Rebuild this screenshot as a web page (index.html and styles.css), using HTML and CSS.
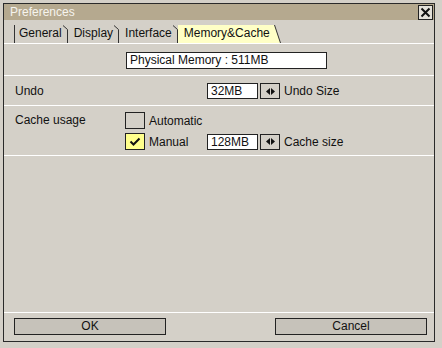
FILE: index.html
```html
<!DOCTYPE html>
<html lang="en">
<head>
    <meta charset="UTF-8">
    <title>Preferences</title>
    <link rel="stylesheet" href="styles.css">
</head>
<body>
    <div class="window">
        <div class="titlebar">
            <span class="title">Preferences</span>
            <div class="close-btn">
                <svg width="11" height="11" viewBox="0 0 11 11"><path d="M1.5 1.5 L9.5 9.5 M9.5 1.5 L1.5 9.5" stroke="#111" stroke-width="2"/></svg>
            </div>
        </div>

        <div class="tabs">
            <div class="tab first"><span>General</span><svg class="tab-edge" width="5" height="18"><path d="M0 0.5 L4.5 4.5 L4.5 18" stroke="#333" fill="none"/></svg></div>
            <div class="tab"><span>Display</span><svg class="tab-edge" width="5" height="18"><path d="M0 0.5 L4.5 4.5 L4.5 18" stroke="#333" fill="none"/></svg></div>
            <div class="tab"><span>Interface</span><svg class="tab-edge" width="5" height="18"><path d="M0 0.5 L4.5 4.5 L4.5 18" stroke="#333" fill="none"/></svg></div>
            <div class="tab active"><span>Memory&amp;Cache</span><svg class="tab-edge" width="7" height="18"><polygon points="0,0 0.5,0 6.5,18 0,18" fill="#ffffc6"/><path d="M0.5 0 L6.5 18" stroke="#333" fill="none"/></svg></div>
        </div>

        <div class="section memory">
            <div class="memory-box">Physical Memory : 511MB</div>
        </div>

        <div class="section undo">
            <div class="row-label">Undo</div>
            <div class="field">
                <div class="textbox">32MB</div>
                <div class="spinner">
                    <svg width="9" height="7" viewBox="0 0 9 7"><polygon points="0,3.5 4,0 4,7" fill="#111"/><polygon points="9,3.5 5,0 5,7" fill="#111"/></svg>
                </div>
                <span class="field-label">Undo Size</span>
            </div>
        </div>

        <div class="section cache">
            <div class="row-label">Cache usage</div>
            <div class="options">
                <div class="option">
                    <div class="check-label">
                        <div class="checkbox"></div>
                        <span>Automatic</span>
                    </div>
                </div>
                <div class="option">
                    <div class="check-label">
                        <div class="checkbox checked">
                            <svg width="12" height="10" viewBox="0 0 12 10"><path d="M1.5 4.5 L4.5 7.5 L10.5 1.5" stroke="#111" stroke-width="2" fill="none"/></svg>
                        </div>
                        <span>Manual</span>
                    </div>
                    <div class="field">
                        <div class="textbox">128MB</div>
                        <div class="spinner">
                            <svg width="9" height="7" viewBox="0 0 9 7"><polygon points="0,3.5 4,0 4,7" fill="#111"/><polygon points="9,3.5 5,0 5,7" fill="#111"/></svg>
                        </div>
                        <span class="field-label">Cache size</span>
                    </div>
                </div>
            </div>
        </div>

        <div class="section spacer"></div>

        <div class="footer">
            <div class="btn">OK</div>
            <div class="btn">Cancel</div>
        </div>
    </div>
</body>
</html>
```

FILE: styles.css
```css
* {
    margin: 0;
    padding: 0;
    box-sizing: border-box;
}

body {
    font-family: 'Liberation Sans', Arial, sans-serif;
    font-size: 12px;
    background: #d4d0c8;
    color: #111;
    width: 442px;
    height: 348px;
    overflow: hidden;
}

.window {
    margin: 3px 0 0 3px;
    width: 432px;
    height: 339px;
    border: 1px solid #2a2a2a;
    display: flex;
    flex-direction: column;
}

.titlebar {
    height: 16px;
    background: #b5a98f;
    display: flex;
    align-items: center;
    justify-content: space-between;
    padding: 0 1px 0 6px;
}

.title {
    color: #f6f4ee;
    line-height: 16px;
}

.close-btn {
    width: 15px;
    height: 15px;
    background: #e4e1da;
    border: 1px solid #222;
    display: flex;
    align-items: center;
    justify-content: center;
}

.tabs {
    margin-top: 5px;
    height: 19px;
    padding-left: 10px;
    border-bottom: 1px solid #fff;
    display: flex;
    align-items: flex-start;
}

.tab {
    height: 18px;
    display: flex;
    align-items: flex-start;
}

.tab span {
    line-height: 17px;
    padding: 0 1px 0 6px;
}

.tab.first {
    border-left: 1px solid #333;
}

.tab.first span {
    padding-left: 4px;
}

.tab-edge {
    display: block;
}

.tab.active span {
    background: #ffffc6;
    padding: 0 4px 0 6px;
    height: 18px;
}

.section {
    border-bottom: 1px solid #fff;
    display: flex;
}

.memory {
    height: 32px;
    padding: 8px 0 0 122px;
}

.memory-box {
    width: 201px;
    height: 17px;
    background: #fff;
    border: 1px solid #222;
    padding-left: 3px;
    line-height: 15px;
}

.row-label {
    width: 110px;
    padding-left: 11px;
    line-height: 16px;
}

.undo {
    height: 30px;
    padding-top: 7px;
}

.undo .field {
    margin-left: 93px;
}

.field {
    display: flex;
    align-items: center;
    height: 16px;
}

.textbox {
    width: 51px;
    height: 16px;
    background: #fff;
    border: 1px solid #222;
    padding-left: 3px;
    line-height: 14px;
}

.spinner {
    width: 20px;
    height: 16px;
    margin-left: 2px;
    border: 1px solid #222;
    display: flex;
    align-items: center;
    justify-content: center;
}

.field-label {
    margin-left: 4px;
}

.cache {
    height: 50px;
    padding-top: 6px;
}

.cache .row-label {
    line-height: 17px;
}

.options {
    display: flex;
    flex-direction: column;
    gap: 4px;
    margin-left: 11px;
}

.option {
    display: flex;
    align-items: center;
}

.check-label {
    width: 82px;
    display: flex;
    align-items: center;
    gap: 4px;
}

.checkbox {
    width: 20px;
    height: 17px;
    border: 1px solid #222;
    background: #d4d0c8;
    display: flex;
    align-items: center;
    justify-content: center;
}

.checkbox.checked {
    background: #ffff8c;
}

.spacer {
    flex: 1;
}

.footer {
    height: 28px;
    display: flex;
    align-items: center;
    justify-content: space-between;
    padding: 0 7px 1px 10px;
}

.btn {
    width: 152px;
    height: 17px;
    background: #c6c2ba;
    border: 1px solid #222;
    text-align: center;
    line-height: 15px;
}
```
